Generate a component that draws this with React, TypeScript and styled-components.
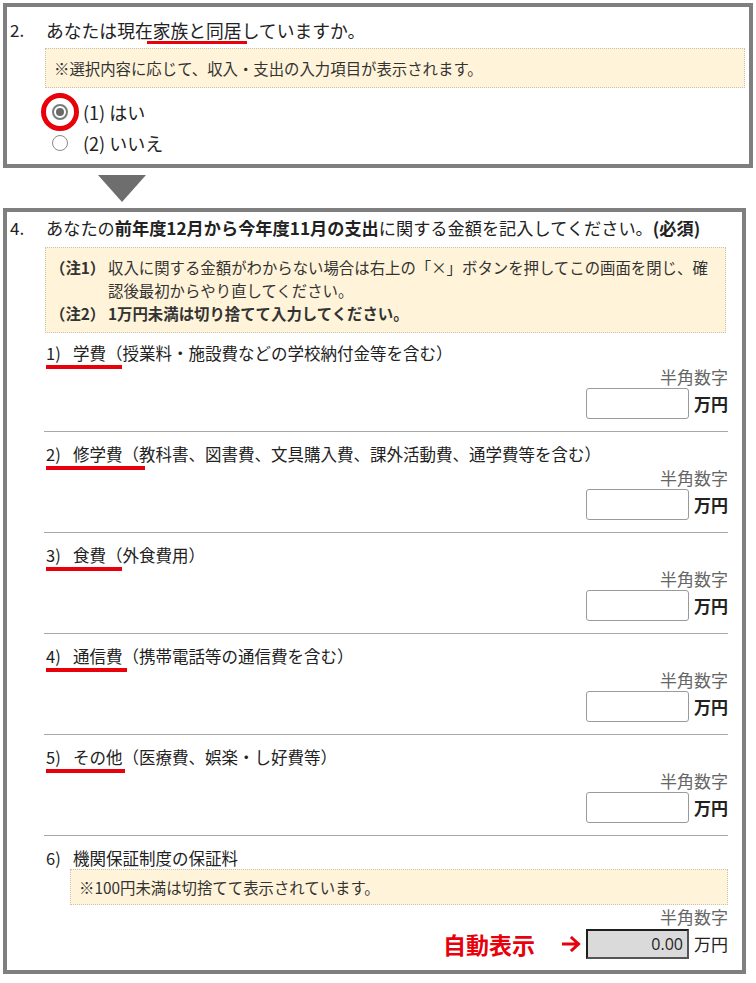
import styled, { createGlobalStyle } from "styled-components";

const GlobalStyle = createGlobalStyle`
  body {
    margin: 0;
    background: #ffffff;
    color: #222;
    font-family: "Noto Sans CJK JP", "Noto Sans", sans-serif;
  }
`;

const Page = styled.div`
  display: flex;
  flex-direction: column;
  align-items: flex-start;
  padding: 3px 0 0 3px;
`;

const Panel = styled.section<{ $width: number; $pad: string }>`
  box-sizing: border-box;
  width: ${(p) => p.$width}px;
  border: 4px solid #7f7f7f;
  padding: ${(p) => p.$pad};
  display: grid;
  grid-template-columns: 36px 1fr;
`;

const QNum = styled.div`
  font-size: 17px;
  line-height: 24px;
`;

const QBody = styled.div`
  display: flex;
  flex-direction: column;
  min-width: 0;
`;

const Question = styled.div<{ $size: number }>`
  font-size: ${(p) => p.$size}px;
  line-height: 24px;
  white-space: nowrap;

  b {
    font-weight: 700;
  }
`;

const Marked = styled.span<{ $left?: number; $right: number; $bottom: number; $thick: number }>`
  position: relative;

  &::after {
    content: "";
    position: absolute;
    left: ${(p) => -(p.$left ?? 0)}px;
    right: ${(p) => -p.$right}px;
    bottom: ${(p) => p.$bottom}px;
    height: ${(p) => p.$thick}px;
    background: #e8000b;
  }
`;

const Note = styled.div<{ $pad: string; $margin: string }>`
  box-sizing: border-box;
  margin: ${(p) => p.$margin};
  padding: ${(p) => p.$pad};
  background: #fff3d9;
  border: 1px dotted #c9c2b0;
  font-size: 15.4px;
  line-height: 22px;
  color: #333;
  white-space: nowrap;
`;

const NoteRow = styled.div`
  display: flex;
  line-height: 23px;

  b {
    font-weight: 700;
  }
`;

const NoteLabel = styled.b`
  flex: 0 0 58px;
  font-weight: 700;
`;

const RadioList = styled.div`
  display: flex;
  flex-direction: column;
  margin-top: 8px;
  padding-left: 6px;
`;

const RadioRow = styled.label`
  display: flex;
  align-items: center;
  gap: 15px;
  height: 31px;
  font-size: 18px;
`;

const Radio = styled.span<{ $checked?: boolean; $marked?: boolean }>`
  position: relative;
  box-sizing: border-box;
  flex: 0 0 16px;
  width: 16px;
  height: 16px;
  border-radius: 50%;
  border: ${(p) => (p.$checked ? "2px solid #7a7a7a" : "1.5px solid #8a8a8a")};
  background: #fff;
  display: flex;
  align-items: center;
  justify-content: center;

  &::before {
    content: "";
    display: ${(p) => (p.$checked ? "block" : "none")};
    width: 8px;
    height: 8px;
    border-radius: 50%;
    background: #6a6a6a;
  }

  &::after {
    content: "";
    display: ${(p) => (p.$marked ? "block" : "none")};
    position: absolute;
    inset: -13px;
    border: 5px solid #e8000b;
    border-radius: 50%;
  }
`;

const DownArrow = styled.div`
  width: 0;
  height: 0;
  margin: 7px 0 6px 95px;
  border-left: 24px solid transparent;
  border-right: 24px solid transparent;
  border-top: 27px solid #6e6e6e;
`;

const ItemList = styled.div`
  display: flex;
  flex-direction: column;
  margin-left: -2px;
`;

const Item = styled.div<{ $first?: boolean; $last?: boolean }>`
  display: flex;
  flex-direction: column;
  padding: ${(p) => (p.$first ? "8px" : "10px")} 0 ${(p) => (p.$last ? "0" : "12px")} 2px;
  border-top: ${(p) => (p.$first ? "none" : "1px solid #a8a8a8")};
`;

const ItemLabel = styled.div`
  font-size: 16.5px;
  line-height: 24px;
  white-space: nowrap;
`;

const ItemNum = styled.span`
  display: inline-block;
  width: 27px;
`;

const Hint = styled.div`
  margin-top: 1px;
  text-align: right;
  font-size: 17px;
  line-height: 22px;
  color: #666;
`;

const InputRow = styled.div`
  display: flex;
  align-items: center;
  justify-content: flex-end;
  gap: 5px;
  height: 31px;
`;

const Amount = styled.input`
  box-sizing: border-box;
  width: 103px;
  height: 31px;
  border: 1px solid #9a9a9a;
  border-radius: 3px;
  background: #fff;
  padding: 0 4px;
  font-family: "Noto Sans CJK JP", sans-serif;
  font-size: 17px;
  text-align: right;
  color: #222;
  outline: none;
`;

const AutoAmount = styled(Amount)`
  height: 30px;
  border-radius: 0;
  border: 2px solid #1e1e1e;
  border-right-color: #555;
  border-bottom-color: #555;
  background: #dadada;
  font-family: "Open Sans", "Noto Sans", sans-serif;
  font-size: 16px;
`;

const Unit = styled.span<{ $bold?: boolean }>`
  width: 34px;
  font-size: 17px;
  font-weight: ${(p) => (p.$bold ? 700 : 400)};
  line-height: 22px;
`;

const AutoLabel = styled.span`
  margin-right: 22px;
  font-size: 23px;
  font-weight: 700;
  color: #e8000b;
`;

const ArrowIcon = () => (
  <svg width="19" height="16" viewBox="0 0 19 16">
    <path
      d="M1 8 H16 M10 2 L16.5 8 L10 14"
      fill="none"
      stroke="#e8000b"
      strokeWidth="3"
      strokeLinecap="square"
    />
  </svg>
);

type Expense = { num: string; name: string; detail: string; extend: number };

const expenses: Expense[] = [
  { num: "1)", name: "学費", detail: "（授業料・施設費などの学校納付金等を含む）", extend: 16 },
  { num: "2)", name: "修学費", detail: "（教科書、図書費、文具購入費、課外活動費、通学費等を含む）", extend: 22 },
  { num: "3)", name: "食費", detail: "（外食費用）", extend: 16 },
  { num: "4)", name: "通信費", detail: "（携帯電話等の通信費を含む）", extend: 4 },
  { num: "5)", name: "その他", detail: "（医療費、娯楽・し好費等）", extend: 2 },
];

export default function App() {
  return (
    <>
      <GlobalStyle />
      <Page>
        <Panel $width={750} $pad="11px 4px 6px 3px">
          <QNum>2.</QNum>
          <QBody>
            <Question $size={17.8}>
              あなたは現在
              <Marked $left={6} $right={5} $bottom={-1} $thick={3}>
                家族と同居
              </Marked>
              していますか。
            </Question>
            <Note $pad="8px 8px" $margin="6px 0 0 -1px">
              ※選択内容に応じて、収入・支出の入力項目が表示されます。
            </Note>
            <RadioList>
              <RadioRow>
                <Radio $checked $marked />
                (1) はい
              </RadioRow>
              <RadioRow>
                <Radio />
                (2) いいえ
              </RadioRow>
            </RadioList>
          </QBody>
        </Panel>

        <DownArrow />

        <Panel $width={743} $pad="4px 14px 11px 3px">
          <QNum>4.</QNum>
          <QBody>
            <Question $size={17.2}>
              あなたの<b>前年度12月から今年度11月の支出</b>に関する金額を記入してください。<b>(必須)</b>
            </Question>
            <Note $pad="8px 4px 7px 4px" $margin="7px 2px 0 -1px">
              <NoteRow>
                <NoteLabel>（注1）</NoteLabel>
                <span>
                  収入に関する金額がわからない場合は右上の「×」ボタンを押してこの画面を閉じ、確
                  <br />
                  認後最初からやり直してください。
                </span>
              </NoteRow>
              <NoteRow>
                <NoteLabel>（注2）</NoteLabel>
                <b>1万円未満は切り捨てて入力してください。</b>
              </NoteRow>
            </Note>
            <ItemList>
              {expenses.map((e, i) => (
                <Item key={e.num} $first={i === 0}>
                  <ItemLabel>
                    <Marked $right={e.extend} $bottom={-4} $thick={4}>
                      <ItemNum>{e.num}</ItemNum>
                      {e.name}
                    </Marked>
                    {e.detail}
                  </ItemLabel>
                  <Hint>半角数字</Hint>
                  <InputRow>
                    <Amount type="text" />
                    <Unit $bold>万円</Unit>
                  </InputRow>
                </Item>
              ))}
              <Item $last>
                <ItemLabel>
                  <ItemNum>6)</ItemNum>機関保証制度の保証料
                </ItemLabel>
                <Note $pad="6px 8px 6px 8px" $margin="-1px 0 0 24px">
                  ※100円未満は切捨てて表示されています。
                </Note>
                <Hint>半角数字</Hint>
                <InputRow>
                  <AutoLabel>自動表示</AutoLabel>
                  <ArrowIcon />
                  <AutoAmount type="text" readOnly value="0.00" />
                  <Unit>万円</Unit>
                </InputRow>
              </Item>
            </ItemList>
          </QBody>
        </Panel>
      </Page>
    </>
  );
}
